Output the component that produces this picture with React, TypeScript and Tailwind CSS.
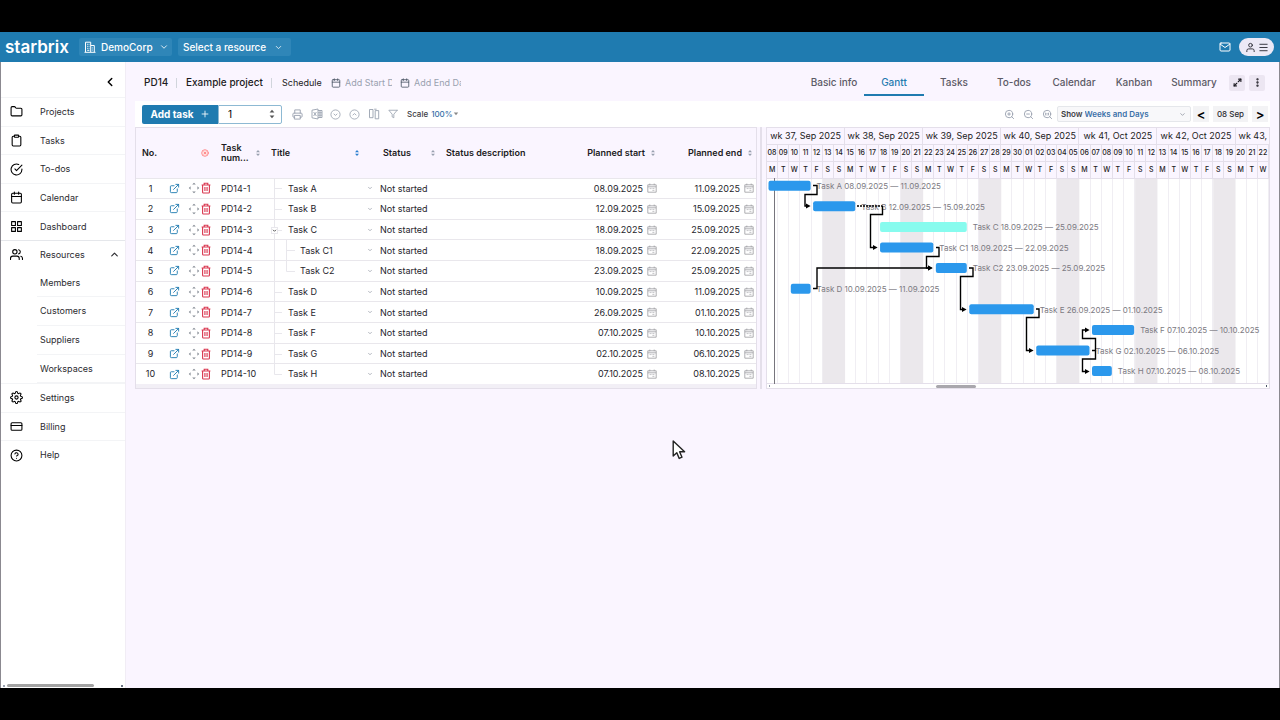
import type { ReactNode } from "react";
import {
  Calendar, ChevronDown, ChevronLeft, ChevronUp, CircleX, CreditCard, EllipsisVertical, Folder, Maximize2,
  Menu, Plus,
} from "lucide-react";
import {
  FiCheckCircle, FiChevronDown, FiClipboard, FiExternalLink, FiFilter, FiGrid, FiHelpCircle, FiMail,
  FiPrinter, FiSettings, FiUser, FiUsers, FiZoomIn, FiZoomOut,
} from "react-icons/fi";

const DAY = 502 / 45;
const ROW = 206 / 10;

const nav = [
  { label: "Projects", icon: <Folder size={13} /> },
  { label: "Tasks", icon: <FiClipboard size={13} /> },
  { label: "To-dos", icon: <FiCheckCircle size={13} /> },
  { label: "Calendar", icon: <Calendar size={13} /> },
  { label: "Dashboard", icon: <FiGrid size={13} /> },
  { label: "Resources", icon: <FiUsers size={13} />, open: true },
  { label: "Members", child: true },
  { label: "Customers", child: true },
  { label: "Suppliers", child: true },
  { label: "Workspaces", child: true },
  { label: "Settings", icon: <FiSettings size={13} /> },
  { label: "Billing", icon: <CreditCard size={13} /> },
  { label: "Help", icon: <FiHelpCircle size={13} /> },
];

const tabs = ["Basic info", "Gantt", "Tasks", "To-dos", "Calendar", "Kanban", "Summary"];

// from / days are counted in days from the left edge of the timeline
const tasks = [
  { title: "Task A", start: "08.09.2025", end: "11.09.2025", from: 0, days: 4 },
  { title: "Task B", start: "12.09.2025", end: "15.09.2025", from: 4, days: 4 },
  { title: "Task C", start: "18.09.2025", end: "25.09.2025", from: 10, days: 8, parent: true },
  { title: "Task C1", start: "18.09.2025", end: "22.09.2025", from: 10, days: 5, child: true },
  { title: "Task C2", start: "23.09.2025", end: "25.09.2025", from: 15, days: 3, child: true },
  { title: "Task D", start: "10.09.2025", end: "11.09.2025", from: 2, days: 2 },
  { title: "Task E", start: "26.09.2025", end: "01.10.2025", from: 18, days: 6 },
  { title: "Task F", start: "07.10.2025", end: "10.10.2025", from: 29, days: 4 },
  { title: "Task G", start: "02.10.2025", end: "06.10.2025", from: 24, days: 5 },
  { title: "Task H", start: "07.10.2025", end: "08.10.2025", from: 29, days: 2 },
];

const weeks = [
  "wk 37, Sep 2025", "wk 38, Sep 2025", "wk 39, Sep 2025", "wk 40, Sep 2025",
  "wk 41, Oct 2025", "wk 42, Oct 2025", "wk 43, Oct 2025",
];
const days = Array.from({ length: 45 }, (_, i) => {
  const n = i < 23 ? i + 8 : i - 22;
  return { num: String(n).padStart(2, "0"), letter: "MTWTFSS"[i % 7] };
});

const links = [
  "M46 7.5H50V16.5H38V28H41",
  "M115.5 28V36.5H103.5V69.5H108",
  "M169 69.5H172V78.5H159.5V90H163",
  "M46 110.5H50V90H163",
  "M202 90H206V98.5H193.5V131.5H197",
  "M269 131H272V139.5H259.5V172.5H264",
  "M325 172.5H328.5V160.5H315.5V152H320",
  "M328.5 172.5V181H315.5V193.5H320",
];

function Sorter({ active }: { active?: boolean }) {
  return (
    <svg viewBox="0 0 6 8" className={active ? "h-2 w-1.5 shrink-0 text-[#2b7fd0]" : "h-2 w-1.5 shrink-0 text-gray-400"} fill="currentColor">
      <path d="M3 1 5 3.2H1zM3 7 1 4.8h4z" />
    </svg>
  );
}

function BuildingIcon() {
  return (
    <svg viewBox="0 0 12 12" className="ml-[5px] h-3 w-3" fill="none" stroke="currentColor" strokeWidth="1">
      <path d="M1.5 11V1.2h5.2V11M6.7 4.5h3.6V11M.5 11.3h11" />
      <path d="M3.2 3.3h.8M4.6 3.3h.8M3.2 5.3h.8M4.6 5.3h.8M3.2 7.3h.8M4.6 7.3h.8M3.2 9.3h2.2M8.3 6.5v.9M8.3 8.6v.9" />
    </svg>
  );
}

function MoveIcon() {
  return (
    <svg viewBox="0 0 12 12" className="h-3 w-3" fill="#858b94">
      <path d="M6 .8 7.8 2.6H4.2zM6 11.2 4.2 9.4h3.6zM.8 6l1.8-1.8v3.6zM11.2 6 9.4 7.8V4.2z" />
    </svg>
  );
}

function TrashIcon() {
  return (
    <svg viewBox="0 0 12 12" className="h-3 w-3" fill="none" stroke="#d9364f" strokeWidth="1.1">
      <path d="M1.6 3h8.8M4.2 3V1.3h3.6V3M2.6 3v7.2q0 .8.8.8h5.2q.8 0 .8-.8V3" />
      <path d="M4.7 5v4M6 5v4M7.3 5v4" strokeWidth=".8" />
    </svg>
  );
}

function DateIcon() {
  return (
    <svg viewBox="0 0 10 10" className="h-2.5 w-2.5 shrink-0" fill="none" stroke="#9a9aa0" strokeWidth=".8">
      <path d="M.8 1.8h8.4v7.4H.8zM.8 3.8h8.4M2.8.6v1.6M7.2.6v1.6" />
      <path d="M2.6 5.6h2M5.4 5.6h2M5.4 7.4h2" strokeWidth=".6" />
    </svg>
  );
}

function ExcelIcon() {
  return (
    <svg viewBox="0 0 12 12" className="h-3 w-3" fill="none" stroke="currentColor" strokeWidth=".9">
      <path d="M1 2.2 7 1v10L1 9.8zM7 2.5h4v7H7M9 2.5v7M7 4.8h4M7 7.2h4" />
      <path d="m2.6 4 2.8 4M5.4 4 2.6 8" />
    </svg>
  );
}

function ColumnsIcon() {
  return (
    <svg viewBox="0 0 12 12" className="h-3 w-3" fill="none" stroke="currentColor" strokeWidth=".9">
      <path d="M1.5 1.5H5v8.2H1.5zM7.2 2.6h3.5v8.2H7.2zM6.2 1.2h2.4" />
    </svg>
  );
}

function CircleArrow({ up }: { up?: boolean }) {
  return (
    <svg viewBox="0 0 12 12" className="h-[11px] w-[11px]" fill="none" stroke="currentColor" strokeWidth=".9">
      <circle cx="6" cy="6" r="5" />
      <path d={up ? "M4 6.8 6 5l2 1.8" : "M4 5.2 6 7l2-1.8"} />
    </svg>
  );
}

function ToolButton({ label, children }: { label: string; children: ReactNode }) {
  return (
    <button aria-label={label} className="flex w-[19px] items-center justify-center text-gray-400">
      {children}
    </button>
  );
}

function TopBar() {
  return (
    <header className="flex h-[30px] shrink-0 items-center bg-[#1f7bb0] pr-1.5 pl-[5px] text-white">
      <a href="#home" className="w-[74px] text-[17px] leading-none font-semibold">starbrix</a>
      <label className="relative flex h-[18px] w-[93px] items-center rounded-xs bg-[#2f86b8]">
        <BuildingIcon />
        <select aria-label="Company" className="h-full w-[76px] appearance-none bg-transparent pl-[5px] text-[10px] font-medium outline-none">
          <option>DemoCorp</option>
        </select>
        <ChevronDown size={10} className="pointer-events-none absolute right-[3px]" />
      </label>
      <label className="relative ml-1.5 flex h-[18px] w-[113px] items-center rounded-xs bg-[#2f86b8]">
        <select aria-label="Resource" className="h-full w-full appearance-none bg-transparent pl-[5px] text-[10px] font-medium outline-none">
          <option>Select a resource</option>
        </select>
        <ChevronDown size={9} className="pointer-events-none absolute right-2" />
      </label>
      <button aria-label="Messages" className="ml-auto"><FiMail size={12} /></button>
      <button aria-label="Account" className="ml-2 flex h-[18px] w-[35px] items-center justify-center gap-0.5 rounded-full bg-[#ece9f6] text-[#2a2a33]">
        <FiUser size={11} />
        <Menu size={11} />
      </button>
    </header>
  );
}

function Sidebar() {
  return (
    <aside className="flex w-[125px] shrink-0 flex-col border-r border-[#f1edf5] bg-white">
      <button aria-label="Collapse menu" className="flex h-[35px] w-full items-center justify-end pt-1 pr-2">
        <ChevronLeft size={14} strokeWidth={2.5} />
      </button>
      <nav className="grid h-[372px] auto-rows-fr">
        {nav.map((item) => (
          <a
            key={item.label}
            href={`#${item.label.toLowerCase()}`}
            className={
              item.child
                ? "ml-9 flex items-center border-b border-gray-100 pl-[3px] text-[9px] text-[#2b2b30]"
                : item.open
                  ? "flex items-center border-t border-gray-200 pl-[9px] text-[9px] text-[#2b2b30]"
                  : "flex items-center border-t border-gray-100 pl-[9px] text-[9px] text-[#2b2b30]"
            }
          >
            {!item.child && <span className="w-[30px] text-black">{item.icon}</span>}
            {item.label}
            {item.open && <ChevronUp size={11} strokeWidth={2.5} className="mr-[5px] ml-auto" />}
          </a>
        ))}
      </nav>
      <div className="mt-auto flex h-[5px] items-center justify-between px-0.5">
        <span className="h-0.5 w-0.5 bg-gray-400" />
        <span className="mr-auto ml-0.5 h-[3px] w-[87px] rounded-full bg-[#a3a3a3]" />
        <span className="h-0.5 w-0.5 bg-gray-500" />
      </div>
    </aside>
  );
}

function ProjectBar() {
  return (
    <div className="flex h-[39px] items-center pt-0.5 pl-[9px] text-[10px] text-[#1c1b22]">
      <h1 className="w-8 font-medium">PD14</h1>
      <span className="h-[10px] w-px bg-gray-300" />
      <h2 className="ml-[9px] w-[85px] font-medium">Example project</h2>
      <span className="h-[10px] w-px bg-gray-300" />
      <span className="ml-2.5 w-[49px] text-[9px]">Schedule</span>
      <label className="flex w-[69px] items-center gap-1">
        <Calendar size={10} className="shrink-0 text-gray-600" />
        <input aria-label="Start date" placeholder="Add Start Date" className="w-[47px] bg-transparent text-[9px] outline-none placeholder:text-gray-400" />
      </label>
      <label className="flex items-center gap-1">
        <Calendar size={10} className="shrink-0 text-gray-600" />
        <input aria-label="End date" placeholder="Add End Date" className="w-[47px] bg-transparent text-[9px] outline-none placeholder:text-gray-400" />
      </label>
      <div className="ml-auto flex items-center">
        <nav className="flex">
          {tabs.map((tab) => (
            <a
              key={tab}
              href={`#${tab}`}
              className={
                tab === "Gantt"
                  ? "flex h-[26px] w-[60px] items-center justify-center border-b-2 border-[#1f7bb0] pt-0.5 text-[10px] font-medium text-[#1f7bb0]"
                  : "flex h-[26px] w-[60px] items-center justify-center border-b-2 border-transparent pt-0.5 text-[10px] font-medium text-[#5c5a66]"
              }
            >
              {tab}
            </a>
          ))}
        </nav>
        <button aria-label="Full screen" className="ml-[5px] flex h-4 w-4 items-center justify-center rounded-xs bg-[#ece6f2]">
          <Maximize2 size={9} strokeWidth={3} />
        </button>
        <button aria-label="More" className="mr-[5px] ml-1 flex h-4 w-4 items-center justify-center rounded-xs bg-[#ece6f2]">
          <EllipsisVertical size={11} strokeWidth={3} />
        </button>
      </div>
    </div>
  );
}

function Toolbar() {
  return (
    <div className="flex h-[26px] items-center bg-white pl-[7px]">
      <button className="flex h-[19px] w-[76px] items-center justify-center gap-1.5 rounded-l-xs bg-[#1f7bb0] text-[10px] font-bold text-white">
        Add task <Plus size={10} />
      </button>
      <div className="mr-1.5 flex h-[19px] w-[64px] items-center rounded-r-xs border border-[#8db9d3] pr-1.5 pl-[9px]">
        <input aria-label="Number of tasks" defaultValue="1" className="w-full min-w-0 text-[10px] outline-none" />
        <svg viewBox="0 0 6 10" className="h-2.5 w-1.5 shrink-0" fill="#555">
          <path d="M3 .8 5.4 3.6H.6zM3 9.2.6 6.4h4.8z" />
        </svg>
      </div>
      <ToolButton label="Print"><FiPrinter size={11} /></ToolButton>
      <ToolButton label="Export to Excel"><ExcelIcon /></ToolButton>
      <ToolButton label="Expand all"><CircleArrow /></ToolButton>
      <ToolButton label="Collapse all"><CircleArrow up /></ToolButton>
      <ToolButton label="Columns"><ColumnsIcon /></ToolButton>
      <ToolButton label="Filter"><FiFilter size={10} /></ToolButton>
      <label className="relative ml-[5px] flex items-center text-[8px] font-medium text-[#3c3c44]">
        Scale
        <select className="w-[31px] appearance-none bg-transparent pl-[3px] text-[#3a70a8] outline-none">
          <option>100%</option>
        </select>
        <svg viewBox="0 0 6 4" className="pointer-events-none absolute right-0 h-1 w-1.5" fill="#888"><path d="M.8.5h4.4L3 3.2z" /></svg>
      </label>
      <div className="ml-auto flex items-center">
        <ToolButton label="Zoom in"><FiZoomIn size={11} /></ToolButton>
        <ToolButton label="Zoom out"><FiZoomOut size={11} /></ToolButton>
        <ToolButton label="Zoom to fit">
          <svg viewBox="0 0 24 24" className="h-[11px] w-[11px]" fill="none" stroke="currentColor" strokeWidth="2" strokeLinecap="round">
            <circle cx="11" cy="11" r="8" />
            <path d="m21 21-4.3-4.3M8 9v4M14 9v4M11 10v.1M11 13v.1" />
          </svg>
        </ToolButton>
        <label className="relative flex h-4 w-[134px] items-center rounded-xs border border-gray-200 bg-[#f8f8fa] pl-[3px] text-[8px] font-semibold text-[#3c3c44]">
          Show
          <select className="w-[100px] appearance-none bg-transparent pl-0.5 text-[#3a70a8] outline-none">
            <option>Weeks and Days</option>
          </select>
          <ChevronDown size={7} className="pointer-events-none absolute right-1 text-gray-500" />
        </label>
        <button aria-label="Previous" className="ml-0.5 h-4 w-4 bg-[#f3f3f5] text-[13px] leading-4 font-semibold">&lt;</button>
        <button className="ml-1 h-4 w-[35px] bg-[#f3f3f5] text-[8px] leading-4 font-medium text-[#2b2b30]">08 Sep</button>
        <button aria-label="Next" className="mr-0.5 ml-1 h-4 w-4 bg-[#f3f3f5] text-[13px] leading-4 font-semibold">&gt;</button>
      </div>
    </div>
  );
}

function TreeLines({ index }: { index: number }) {
  const task = tasks[index];
  const last = index === tasks.length - 1;
  return (
    <svg
      viewBox="0 0 36 20"
      className={task.child ? "h-5 w-9 shrink-0" : "-mr-3 h-5 w-9 shrink-0"}
      fill="none"
      stroke="#e8e7ec"
      strokeWidth="1"
    >
      <path d={last ? "M10.5-1V10.5H18" : "M10.5-1V21"} />
      {task.child && <path d={index === 4 ? "M22.5-1V10.5H31" : "M22.5-1V21M22.5 10.5H31"} />}
      {!task.child && !last && <path d="M10.5 10.5H18" />}
      {task.parent && (
        <g>
          <rect x="7.5" y="7.5" width="6" height="6" fill="white" />
          <path d="m9 9.8 1.5 1.5L12 9.8" stroke="#555" />
        </g>
      )}
    </svg>
  );
}

function TaskTable() {
  return (
    <div className="min-w-0 flex-1 border border-[#e4dfea] bg-[#f2eff6] pb-1">
      <table className="h-[256px] w-full table-fixed border-collapse bg-white text-left text-[9px] text-[#26252c]">
        <colgroup>
          <col className="w-[29px]" />
          <col className="w-5" />
          <col className="w-[29px]" />
          <col className="w-[50px]" />
          <col className="w-[112px]" />
          <col className="w-[63px]" />
          <col />
          <col className="w-[100px]" />
          <col className="w-[97px]" />
        </colgroup>
        <thead className="bg-[#faf5ff] text-[#1c1b22]">
          <tr className="h-[50px]">
            <th scope="col" colSpan={2} className="p-0 pl-1.5 font-semibold">No.</th>
            <th scope="col" className="p-0"><CircleX size={8} className="ml-4 fill-red-100 text-red-400" aria-label="Clear filters" /></th>
            <th scope="col" className="p-0 pl-[7px] font-semibold">
              <div className="flex items-center justify-between pr-[3px] leading-[10px]"><span>Task<br />num...</span><Sorter /></div>
            </th>
            <th scope="col" className="p-0 pr-4 pl-[7px] font-semibold"><div className="flex items-center justify-between">Title<Sorter active /></div></th>
            <th scope="col" className="p-0 pr-[3px] pl-[7px] font-semibold"><div className="flex items-center justify-between">Status<Sorter /></div></th>
            <th scope="col" className="p-0 pl-[7px] font-semibold">Status description</th>
            <th scope="col" className="p-0 pr-[3px] font-semibold"><div className="flex items-center justify-end gap-[5px]">Planned start<Sorter /></div></th>
            <th scope="col" className="p-0 pr-[3px] font-semibold"><div className="flex items-center justify-end gap-[5px]">Planned end<Sorter /></div></th>
          </tr>
        </thead>
        <tbody>
          {tasks.map((task, i) => (
            <tr key={task.title} className="border-t border-[#e9e7ec]">
              <td className="p-0 text-center">{i + 1}</td>
              <td className="p-0">
                <button aria-label={`Open ${task.title}`} className="ml-1 flex text-[#1f7bb0]"><FiExternalLink size={11} /></button>
              </td>
              <td className="p-0">
                <div className="flex justify-end pr-0.5">
                  <button aria-label={`Move ${task.title}`}><MoveIcon /></button>
                  <button aria-label={`Delete ${task.title}`}><TrashIcon /></button>
                </div>
              </td>
              <td className="p-0 pl-[7px] whitespace-nowrap">PD14-{i + 1}</td>
              <td className="p-0">
                <div className="flex h-4 items-center pr-[3px]">
                  <TreeLines index={i} />
                  {task.title}
                  <FiChevronDown size={6} className="ml-auto text-gray-500" />
                </div>
              </td>
              <td className="p-0 pl-1">Not started</td>
              <td className="p-0" />
              <td className="p-0 pr-0.5"><div className="flex items-center justify-end gap-1">{task.start}<DateIcon /></div></td>
              <td className="p-0 pr-0.5"><div className="flex items-center justify-end gap-1">{task.end}<DateIcon /></div></td>
            </tr>
          ))}
        </tbody>
      </table>
    </div>
  );
}

function Timeline() {
  return (
    <div className="w-[504px] shrink-0 overflow-hidden border border-[#e4dfea] bg-white">
      <div className="grid grid-cols-[repeat(45,minmax(0,1fr))] bg-[#faf5ff] text-center text-[#1c1b22]">
        {weeks.map((week, i) => (
          <div
            key={week}
            className={
              i === 6
                ? "col-span-3 h-4 overflow-hidden pl-[3px] text-left text-[9px] leading-4 whitespace-nowrap"
                : "col-span-7 h-4 border-r border-[#e4dfea] text-[9px] leading-4 whitespace-nowrap"
            }
          >
            {i === 6 ? "wk 43," : week}
          </div>
        ))}
        {days.map((day, i) => (
          <div key={i} className="flex h-[17px] items-center justify-center border-t border-r border-[#e4dfea] text-[7px] font-medium">{day.num}</div>
        ))}
        {days.map((day, i) => (
          <div key={i} className="flex h-[17px] items-center justify-center border-t border-r border-[#e4dfea] text-[7px] font-medium">{day.letter}</div>
        ))}
      </div>
      <svg viewBox="0 0 502 206" className="block h-[206px] w-[502px]" role="img" aria-label="Gantt chart">
        <defs>
          <marker id="arrow" viewBox="0 0 6 6" refX="3" refY="3" markerWidth="6" markerHeight="6" markerUnits="userSpaceOnUse" orient="auto">
            <path d="M1 .6 5.6 3 1 5.4z" />
          </marker>
        </defs>
        {days.map((_, i) => (
          <g key={i}>
            {i % 7 === 5 && <rect x={i * DAY} width={DAY * 2} height="206" fill="#ebe8ec" />}
            {i % 7 !== 6 && i % 7 !== 5 && <path d={`M${Math.round((i + 1) * DAY) - 0.5} 0V206`} stroke="#f0eef3" />}
          </g>
        ))}
        <path d="M0 .5H502M0 205.5H502" stroke="#e4dfea" />
        <path d="M7.5 0V206" stroke="#77757d" />
        {tasks.map((task, i) => (
          <g key={task.title}>
            <rect
              x={task.from * DAY + 1.5}
              y={i * ROW + 2.7}
              width={task.days * DAY - 2.5}
              height="10"
              rx="2"
              fill={task.parent ? "#87fbee" : "#2b98ec"}
            />
            <text x={(task.from + task.days) * DAY + 5} y={i * ROW + 11} fontSize="8" fill="#7c7a82">
              {task.title} {task.start} — {task.end}
            </text>
          </g>
        ))}
        <g fill="none" stroke="#000" strokeWidth="1.4">
          <path d="M90 28H115.5" strokeDasharray="2 1" />
          {links.map((d) => <path key={d} d={d} markerEnd="url(#arrow)" />)}
        </g>
      </svg>
      <div className="flex h-1 items-center justify-between px-0.5">
        <span className="h-0.5 w-px bg-gray-400" />
        <span className="mr-auto ml-[166px] h-[3px] w-10 rounded-full bg-[#a9a7ad]" />
        <span className="h-0.5 w-px bg-gray-600" />
      </div>
    </div>
  );
}

export default function App() {
  return (
    <div className="relative flex min-h-screen flex-col bg-black py-8 font-['Inter',sans-serif]">
      <TopBar />
      <div className="flex flex-1 border-x border-[#8b8990] bg-[#faf5ff]">
        <Sidebar />
        <main className="min-w-0 flex-1 pr-[9px] pl-[9px]">
          <ProjectBar />
          <Toolbar />
          <div className="flex">
            <TaskTable />
            <div className="mr-1 ml-[3px] w-0.5 border-x border-[#e4dfea]" />
            <Timeline />
          </div>
        </main>
      </div>
      <svg viewBox="0 0 14 20" className="pointer-events-none absolute top-[440px] left-[672px] h-5 w-3.5" fill="white" stroke="#222" strokeWidth="1.4" strokeLinejoin="round">
        <path d="M1.2 1v15l3.6-3.2 2.4 5.6 2.8-1.2-2.4-5.4h5z" />
      </svg>
    </div>
  );
}
